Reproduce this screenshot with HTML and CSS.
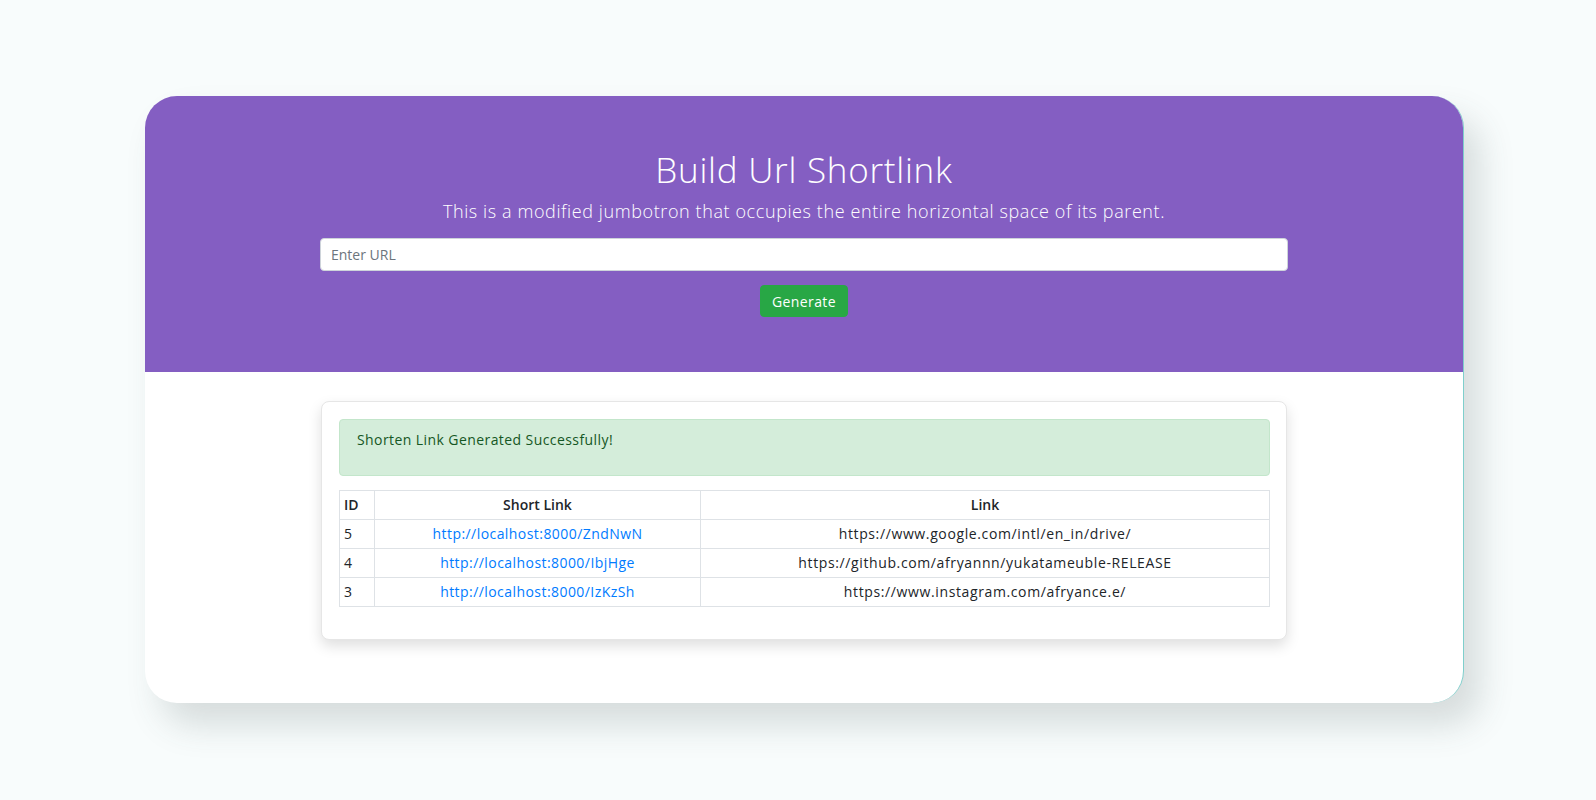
FILE: index.html
```html
<!DOCTYPE html>
<html lang="en">
<head>
<meta charset="utf-8">
<title>Build Url Shortlink</title>
<link rel="stylesheet" href="styles.css">
</head>
<body>
<main class="frame">
  <section class="hero">
    <h1 class="hero-title">Build Url Shortlink</h1>
    <p class="hero-lead">This is a modified jumbotron that occupies the entire horizontal space of its parent.</p>
    <form class="hero-form">
      <input class="url-input" type="text" placeholder="Enter URL">
      <button class="btn-generate" type="button">Generate</button>
    </form>
  </section>
  <section class="content">
    <div class="result-card">
      <div class="alert-success"><p>Shorten Link Generated Successfully!</p></div>
      <table class="links-table">
        <thead>
          <tr><th class="col-id">ID</th><th class="col-short">Short Link</th><th class="col-link">Link</th></tr>
        </thead>
        <tbody>
          <tr><td class="cell-id">5</td><td class="cell-center"><a href="#">http://localhost:8000/ZndNwN</a></td><td class="cell-center cell-url">https://www.google.com/intl/en_in/drive/</td></tr>
          <tr><td class="cell-id">4</td><td class="cell-center"><a href="#">http://localhost:8000/IbjHge</a></td><td class="cell-center cell-url">https://github.com/afryannn/yukatameuble-RELEASE</td></tr>
          <tr><td class="cell-id">3</td><td class="cell-center"><a href="#">http://localhost:8000/IzKzSh</a></td><td class="cell-center cell-url">https://www.instagram.com/afryance.e/</td></tr>
        </tbody>
      </table>
    </div>
  </section>
</main>
</body>
</html>
```

FILE: styles.css
```css
* { box-sizing: border-box; }
html, body { margin: 0; padding: 0; }
body {
  background: #f8fcfc;
  font-family: "Open Sans", "Liberation Sans", sans-serif;
  color: #212529;
  padding-top: 96px;
  height: 800px;
  overflow: hidden;
}
.frame {
  margin-left: 145px;
  width: 1319px;
  height: 607px;
  background: #fff;
  border-radius: 32px;
  border-right: 1px solid #7fcfcc;
  box-shadow: 16px 22px 34px rgba(60, 75, 80, 0.18);
  overflow: hidden;
}
.hero {
  background: #845ec2;
  height: 276px;
  padding-top: 52px;
  display: flex;
  flex-direction: column;
  align-items: center;
  color: #fff;
}
.hero-title {
  margin: 0;
  font-weight: 300;
  font-size: 35px;
  line-height: 44px;
  letter-spacing: 0.75px;
}
.hero-lead {
  margin: 6px 0 0;
  font-weight: 300;
  font-size: 18px;
  line-height: 26px;
  letter-spacing: 0.6px;
}
.hero-form {
  margin-top: 14px;
  display: flex;
  flex-direction: column;
  align-items: center;
}
.url-input {
  width: 968px;
  height: 33px;
  border: 1px solid #ced4da;
  border-radius: 4px;
  padding: 0 10px;
  font-family: inherit;
  font-size: 14px;
  color: #495057;
  background: #fff;
}
.url-input::placeholder { color: #6c757d; }
.btn-generate {
  margin-top: 14px;
  width: 88px;
  height: 32px;
  border: 1px solid #28a745;
  border-radius: 4px;
  background: #28a745;
  color: #fff;
  font-family: inherit;
  font-size: 14px;
  letter-spacing: 0.4px;
  padding: 0;
}
.content {
  padding-top: 29px;
  display: flex;
  justify-content: center;
}
.result-card {
  width: 966px;
  height: 239px;
  background: #fff;
  border: 1px solid #e6e6e6;
  border-radius: 8px;
  box-shadow: 0 6px 14px rgba(0, 0, 0, 0.13);
  padding: 17px 16px 0 17px;
}
.alert-success {
  height: 57px;
  background: #d4edda;
  border: 1px solid #c3e6cb;
  border-radius: 4px;
  color: #155724;
  padding: 10px 17px;
}
.alert-success p {
  margin: 0;
  font-size: 14px;
  line-height: 20px;
  letter-spacing: 0.42px;
}
.links-table {
  margin-top: 14px;
  width: 931px;
  border-collapse: collapse;
  font-size: 14px;
  table-layout: fixed;
}
.links-table th, .links-table td {
  border: 1px solid #dee2e6;
  height: 29px;
  padding: 0 4px;
  line-height: 20px;
}
.links-table th { font-weight: 600; text-align: center; }
.links-table th.col-id { text-align: left; }
.col-id { width: 35px; }
.col-short { width: 326px; }
.cell-id { text-align: left; }
.cell-center { text-align: center; }
.cell-url { letter-spacing: 0.62px; }
.links-table a { color: #007bff; text-decoration: none; letter-spacing: 0.44px; }
```
